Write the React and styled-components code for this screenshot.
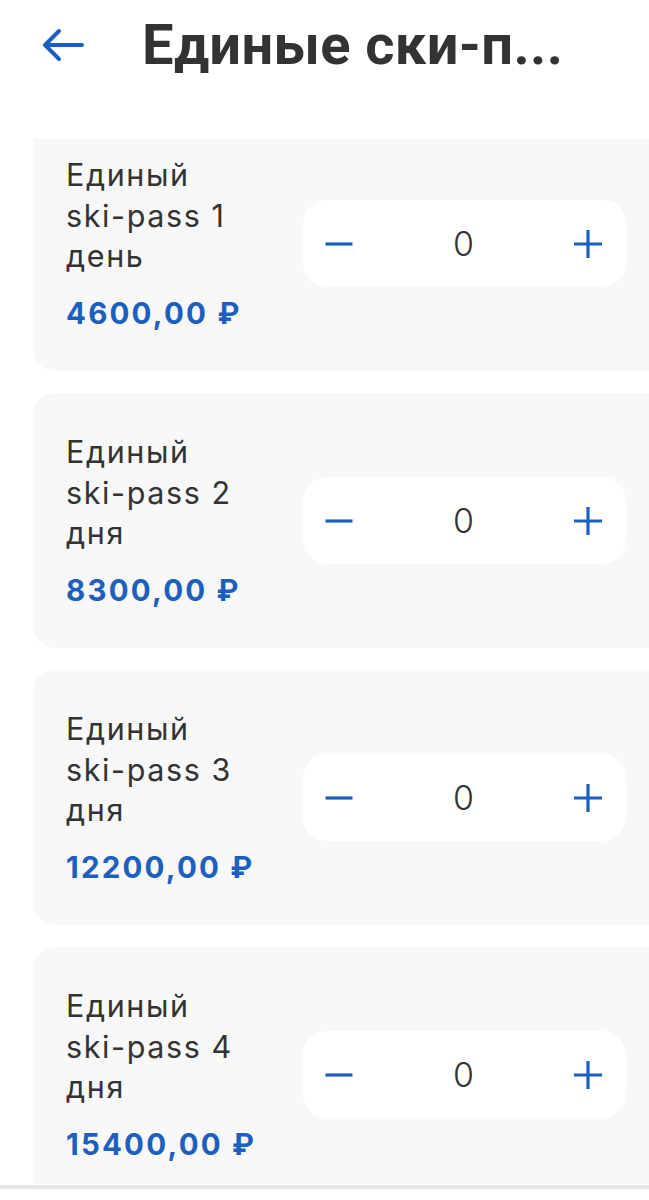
import React from "react";
import styled, { createGlobalStyle } from "styled-components";

const Global = createGlobalStyle`
  html, body { margin: 0; padding: 0; background: #ffffff; }
  body { font-family: Inter, "Noto Sans", Arial, sans-serif; -webkit-font-smoothing: antialiased; }
  * { box-sizing: border-box; }
`;

const Page = styled.div`
  width: 649px;
  height: 1200px;
  display: flex;
  flex-direction: column;
  background: #fff;
  overflow: hidden;
`;

const Header = styled.header`
  height: 139px;
  flex: 0 0 139px;
  display: flex;
  align-items: flex-start;
  padding: 13px 0 0 40px;
  gap: 56px;
`;

const BackButton = styled.button`
  border: 0;
  background: none;
  padding: 0;
  width: 46px;
  height: 64px;
  display: flex;
  align-items: center;
  justify-content: center;
  color: #1d5fbf;
  cursor: pointer;
`;

const Title = styled.h1`
  margin: 0;
  font-family: Roboto, sans-serif;
  font-weight: 700;
  font-size: 56px;
  line-height: 64px;
  color: #333333;
  letter-spacing: 0.4px;
  white-space: nowrap;
`;

const Viewport = styled.main`
  flex: 1 1 auto;
  overflow: hidden;
`;

const List = styled.div`
  margin-top: -23px;
  display: flex;
  flex-direction: column;
  gap: 22px;
  padding-left: 33px;
`;

const Card = styled.section`
  height: 255px;
  flex: 0 0 255px;
  background: #f8f8f8;
  border-radius: 22px 0 0 22px;
  display: flex;
  align-items: center;
  padding: 0 23px 0 33px;
  gap: 10px;
`;

const Info = styled.div`
  flex: 1 1 auto;
  min-width: 0;
  display: flex;
  flex-direction: column;
  margin-top: 1px;
`;

const Name = styled.div`
  font-family: Inter, sans-serif;
  font-size: 30.5px;
  line-height: 40.5px;
  color: #333333;
  font-weight: 400;
  letter-spacing: 1.6px;
`;

const Price = styled.div`
  margin-top: 16px;
  font-family: Inter, sans-serif;
  font-size: 29.5px;
  line-height: 40px;
  font-weight: 700;
  color: #1d5fbf;
  letter-spacing: 2.2px;
  white-space: nowrap;
`;

const Stepper = styled.div`
  flex: 0 0 323px;
  height: 87px;
  background: #ffffff;
  border-radius: 24px;
  display: flex;
  align-items: center;
  justify-content: space-between;
  padding: 0 21px 0 19px;
`;

const StepButton = styled.button`
  border: 0;
  background: none;
  padding: 0;
  width: 34px;
  height: 34px;
  display: flex;
  align-items: center;
  justify-content: center;
  color: #1d5fbf;
`;

const Count = styled.span`
  font-family: Inter, sans-serif;
  font-size: 34px;
  line-height: 40px;
  font-weight: 300;
  color: #333333;
`;

const Footer = styled.footer`
  flex: 0 0 15px;
  border-top: 4px solid #e6e6e6;
  background: #fff;
`;

const ArrowIcon = () => (
  <svg width="42" height="34" viewBox="0 0 42 34" fill="none">
    <path d="M40 17H4M17 3L3 17l14 14" stroke="currentColor" strokeWidth="4" strokeLinecap="round" strokeLinejoin="round" />
  </svg>
);

const MinusIcon = () => (
  <svg width="30" height="30" viewBox="0 0 30 30" fill="none">
    <path d="M1.5 15h27" stroke="currentColor" strokeWidth="3.2" />
  </svg>
);

const PlusIcon = () => (
  <svg width="30" height="30" viewBox="0 0 30 30" fill="none">
    <path d="M1 15h28M15 1v28" stroke="currentColor" strokeWidth="3.2" />
  </svg>
);

const items = [
  { days: "1", unit: "день", price: "4600,00 ₽" },
  { days: "2", unit: "дня", price: "8300,00 ₽" },
  { days: "3", unit: "дня", price: "12200,00 ₽" },
  { days: "4", unit: "дня", price: "15400,00 ₽" },
];

export default function App() {
  return (
    <>
      <Global />
      <Page>
        <Header>
          <BackButton aria-label="Назад">
            <ArrowIcon />
          </BackButton>
          <Title>Единые ски-п...</Title>
        </Header>
        <Viewport>
          <List>
            {items.map((it) => (
              <Card key={it.days}>
                <Info>
                  <Name>
                    Единый
                    <br />
                    ski-pass {it.days}
                    <br />
                    {it.unit}
                  </Name>
                  <Price>{it.price}</Price>
                </Info>
                <Stepper>
                  <StepButton aria-label="Меньше">
                    <MinusIcon />
                  </StepButton>
                  <Count>0</Count>
                  <StepButton aria-label="Больше">
                    <PlusIcon />
                  </StepButton>
                </Stepper>
              </Card>
            ))}
          </List>
        </Viewport>
        <Footer />
      </Page>
    </>
  );
}
